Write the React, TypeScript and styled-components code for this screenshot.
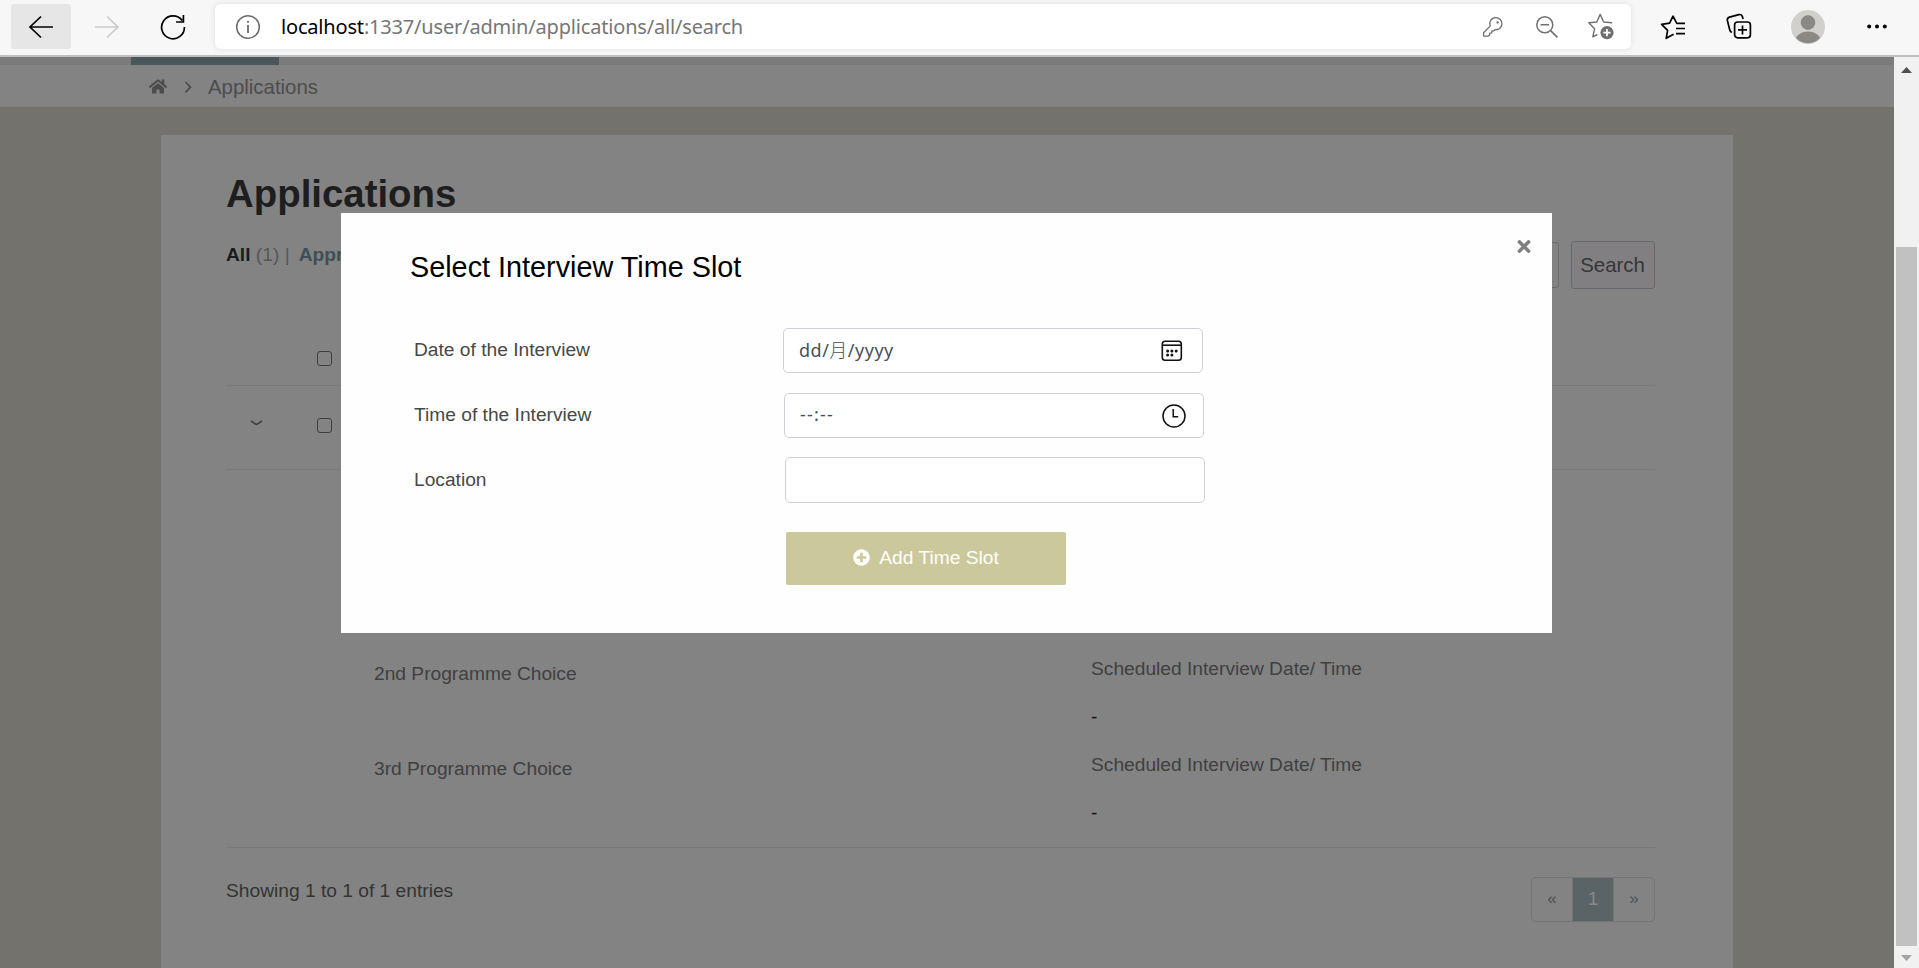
import React from "react";
import styled, { createGlobalStyle } from "styled-components";
import { FaHome, FaPlusCircle, FaTimes } from "react-icons/fa";

const GlobalStyle = createGlobalStyle`
  *, *::before, *::after { box-sizing: border-box; }
  html, body { margin: 0; padding: 0; overflow: hidden; }
  body { font-family: "Liberation Sans", Arial, sans-serif; font-size: 19.2px; line-height: 24px; }
  svg { display: block; flex: none; }
`;

const Browser = styled.div`
  display: flex;
  flex-direction: column;
  width: 1919px;
  height: 968px;
  overflow: hidden;
`;

/* ---------- toolbar ---------- */

const Toolbar = styled.header`
  display: flex;
  flex: none;
  height: 57px;
  padding: 4px 0 0 11px;
  background: #f7f7f7;
  border-bottom: 2px solid #bfbfbf;
`;

const ToolButton = styled.span<{ $width: number; $active?: boolean }>`
  display: flex;
  align-items: center;
  justify-content: center;
  width: ${(p) => p.$width}px;
  height: 45px;
  border-radius: 3px;
  background: ${(p) => (p.$active ? "#e6e6e6" : "transparent")};
`;

const AddressBar = styled.div`
  display: flex;
  align-items: center;
  width: 1416px;
  height: 45px;
  margin-left: 12px;
  padding: 0 16px 0 20px;
  border-radius: 6px;
  background: #fff;
  box-shadow: 0 0 6px rgba(0, 0, 0, 0.1);
`;

const Url = styled.span`
  flex: 1;
  margin-left: 20px;
  font-family: "Noto Sans", sans-serif;
  font-size: 20px;
  letter-spacing: -0.18px;
  line-height: 28px;
  white-space: nowrap;
  color: #767676;
`;

const UrlHost = styled.span`
  color: #000;
`;

const AddressActions = styled.span`
  display: flex;
  align-items: center;
  gap: 28px;
`;

/* ---------- page ---------- */

const Viewport = styled.div`
  position: relative;
  display: flex;
  flex: 1;
  min-height: 0;
`;

const Page = styled.main`
  display: flex;
  flex-direction: column;
  width: 1894px;
  background: #73726d;
`;

const NavStrip = styled.div`
  flex: none;
  height: 8px;
  padding-left: 131px;
  background: #7b7b7b;
`;

const NavTab = styled.div`
  width: 148px;
  height: 8px;
  background: #49565a;
`;

const Breadcrumb = styled.nav`
  display: flex;
  flex: none;
  align-items: center;
  height: 42px;
  padding: 1px 0 0 149px;
  background: #838383;
  color: #4c4c4c;
  font-size: 20.4px;
`;

const HomeIcon = styled(FaHome)`
  width: 18px;
  height: 17px;
`;

const Crumb = styled.span`
  margin: 1px 0 0 15px;
`;

const Card = styled.section`
  display: flex;
  flex-direction: column;
  flex: 1;
  width: 1572px;
  margin: 28px 0 0 161px;
  padding: 36px 78px 0 65px;
  background: #838383;
`;

const Title = styled.h1`
  margin: 0;
  font-size: 38.4px;
  line-height: 46px;
  font-weight: 700;
  color: #1e1e1e;
`;

const FilterRow = styled.div`
  display: flex;
  justify-content: space-between;
  height: 72px;
  margin-top: 24px;
`;

const Filters = styled.div`
  display: flex;
  gap: 9px;
  margin-top: 2px;
  color: #575757;
  white-space: pre;
`;

const FilterName = styled.b<{ $link?: boolean }>`
  color: ${(p) => (p.$link ? "#3d4f59" : "#1c1c1c")};
`;

const SearchForm = styled.div`
  display: flex;
  gap: 12px;
`;

const SearchInput = styled.div`
  width: 300px;
  height: 46px;
  margin-top: 1px;
  border: 1px solid #6b6d70;
  border-radius: 3px;
`;

const SearchButton = styled.button`
  width: 84px;
  height: 48px;
  padding: 0 1px 0 0;
  border: 1px solid #65686d;
  border-radius: 3px;
  background: #827f82;
  color: #363636;
  font-family: inherit;
  font-size: 20.4px;
`;

const TableRow = styled.div<{ $height: number; $top: number }>`
  display: flex;
  height: ${(p) => p.$height}px;
  padding-top: ${(p) => p.$top}px;
  border-bottom: 1px solid #7a7a7a;
`;

const ExpandCell = styled.div`
  width: 91px;
  padding: 1px 0 0 24px;
`;

const Checkbox = styled.span`
  width: 15px;
  height: 15px;
  border: 1px solid #3e3e3e;
  border-radius: 3px;
`;

const Details = styled.div`
  display: flex;
  height: 378px;
  padding: 187px 0 0 148px;
  border-bottom: 1px solid #7a7a7a;
`;

const ChoiceColumn = styled.div`
  display: flex;
  flex-direction: column;
  gap: 71px;
  width: 717px;
  padding-top: 5px;
`;

const ScheduleColumn = styled.div`
  display: flex;
  flex-direction: column;
  gap: 24px;
`;

const DetailText = styled.span<{ $dark?: boolean }>`
  height: 24px;
  color: ${(p) => (p.$dark ? "#121212" : "#404040")};
`;

const Footer = styled.div`
  display: flex;
  justify-content: space-between;
  padding-top: 29px;
`;

const Entries = styled.span`
  padding-top: 2px;
  color: #343434;
`;

const Pager = styled.div`
  display: flex;
  width: 124px;
  height: 45px;
  border: 1px solid #747474;
  border-radius: 5px;
  overflow: hidden;
`;

const PageLink = styled.span<{ $active?: boolean }>`
  flex: 1;
  padding-top: 9px;
  text-align: center;
  font-size: ${(p) => (p.$active ? "19.2px" : "17px")};
  color: ${(p) => (p.$active ? "#888" : "#485258")};
  background: ${(p) => (p.$active ? "#5a6366" : "transparent")};
  & + & { border-left: 1px solid #747474; }
`;

/* ---------- scrollbar ---------- */

const Scrollbar = styled.div`
  display: flex;
  flex-direction: column;
  align-items: center;
  justify-content: space-between;
  width: 25px;
  padding: 10px 0 7px;
  background: #f1f1f1;
`;

const Thumb = styled.div`
  width: 21px;
  height: 699px;
  margin: 165px 0 0;
  background: #c1c1c1;
`;

/* ---------- dialog ---------- */

const Dialog = styled.div`
  position: absolute;
  left: 341px;
  top: 156px;
  width: 1211px;
  height: 420px;
  padding: 26px 21px 0 69px;
  background: #fefefe;
`;

const DialogHeader = styled.div`
  display: flex;
  justify-content: space-between;
  height: 76px;
`;

const DialogTitle = styled.h2`
  margin: 10px 0 0;
  font-size: 28.8px;
  line-height: 36px;
  font-weight: 400;
  color: #000;
`;

const CloseIcon = styled(FaTimes)`
  width: 14px;
  height: 19px;
  margin-top: -2px;
  color: #808080;
`;

const Field = styled.label<{ $indent: number; $height: number }>`
  display: grid;
  grid-template-columns: ${(p) => p.$indent}px 420px;
  height: ${(p) => p.$height}px;
  padding-left: 4px;
  color: #484848;
`;

const FieldName = styled.span<{ $top: number }>`
  padding-top: ${(p) => p.$top}px;
`;

const Control = styled.span<{ $height: number; $top?: number; $right?: number }>`
  display: flex;
  align-items: center;
  justify-content: space-between;
  height: ${(p) => p.$height}px;
  margin-top: ${(p) => p.$top ?? 13}px;
  padding: 0 ${(p) => p.$right ?? 17}px 0 15px;
  border: 1px solid #ced0d9;
  border-radius: 5px;
  background: #fff;
  font-family: "Noto Sans", "Noto Sans CJK SC", sans-serif;
  font-size: 18px;
  color: #495057;
`;

const ControlText = styled.span<{ $spacing: number }>`
  padding-bottom: 3px;
  letter-spacing: ${(p) => p.$spacing}px;
`;

const MonthMark = styled.span`
  font-family: "Noto Sans CJK SC", sans-serif;
  font-weight: 300;
`;

const AddButton = styled.button`
  display: flex;
  align-items: center;
  justify-content: center;
  gap: 9px;
  width: 280px;
  height: 53px;
  margin: 22px 0 0 376px;
  padding: 0 0 2px 0;
  border: 0;
  border-radius: 2px;
  background: #cbc99c;
  color: #fff;
  font-family: inherit;
  font-size: 19.2px;
`;

const PlusIcon = styled(FaPlusCircle)`
  width: 17px;
  height: 17px;
`;

/* ---------- drawings ---------- */

const Arrow = ({ flip, color }: { flip?: boolean; color: string }) => (
  <svg width="26" height="24" viewBox="0 0 26 24" fill="none" stroke={color} strokeWidth="1.7" transform={flip ? "scale(-1 1)" : undefined}>
    <path d="M25 12H2M13 1.5 2 12l11 10.5" />
  </svg>
);

const Reload = () => (
  <svg width="26" height="26" viewBox="0 0 26 26" fill="none" stroke="#000" strokeWidth="1.7">
    <path d="M22.2 6.6A11.4 11.4 0 1 0 24.4 13M23.4 1v7h-7.3" />
  </svg>
);

const Info = () => (
  <svg width="26" height="26" viewBox="0 0 26 26" fill="none" stroke="#6a6a6a" strokeWidth="1.5">
    <circle cx="13" cy="13" r="11.3" />
    <path d="M13 11v8" strokeWidth="1.8" />
    <circle cx="13" cy="7.8" r="1.1" fill="#6a6a6a" stroke="none" />
  </svg>
);

const Key = () => (
  <svg width="25" height="22" viewBox="0 0 25 22" fill="none" stroke="#6f6f6f" strokeWidth="1.3" strokeLinejoin="round">
    <path d="M13.7 1.6a6.1 6.1 0 1 1-.9 12.1l-1.3 1.2-1.6.1-.2 1.9-1.9.2-.2 1.8-1.4 1.2H1.6v-3.4l6.6-6.6a6.1 6.1 0 0 1 5.5-8.5z" />
    <circle cx="15.6" cy="6.4" r="1.2" fill="#6f6f6f" stroke="none" />
  </svg>
);

const ZoomOut = () => (
  <svg width="24" height="24" viewBox="0 0 24 24" fill="none" stroke="#6f6f6f" strokeWidth="1.5">
    <circle cx="9.8" cy="9.8" r="8" />
    <path d="M5.5 9.8h8.6M15.6 15.6l6.8 6.8" />
  </svg>
);

const StarAdd = () => (
  <svg width="28" height="27" viewBox="0 0 28 27" fill="none" stroke="#6f6f6f" strokeWidth="1.4" strokeLinejoin="round">
    <path d="M25.2 9.8 16.6 9 13.2 1.4 9.8 9 1.8 9.8l5.8 6-1.8 8 4.6-2.3" />
    <circle cx="20" cy="19.6" r="6.6" fill="#6f6f6f" stroke="none" />
    <path d="M20 16v7.2M16.4 19.6h7.2" stroke="#fff" strokeWidth="1.7" />
  </svg>
);

const Favorites = () => (
  <svg width="26" height="26" viewBox="0 0 26 26" fill="none" stroke="#000" strokeWidth="1.7" strokeLinejoin="round">
    <path d="M25 9.4h-8.2L13 2.2 9.6 9.2 1.6 10.3l6 6-1.4 8 7.4-4M16 14.5h9M16 19.6h9" />
  </svg>
);

const Collections = () => (
  <svg width="26" height="27" viewBox="0 0 26 27" fill="none" stroke="#000" strokeWidth="1.7">
    <path d="M5.8 19.6C4.6 19 4 18 3.7 16.8L1.4 7.6C1 5.8 1.9 4.6 3.6 4.1L12.8 1.6c1.8-.4 2.9.3 3.5 1.8l.8 2.6" />
    <rect x="8.6" y="9" width="15.8" height="15.8" rx="3" />
    <path d="M16.5 12.4v9M12 16.9h9" />
  </svg>
);

const Avatar = () => (
  <svg width="34" height="34" viewBox="0 0 34 34">
    <defs>
      <clipPath id="avatar-clip"><circle cx="17" cy="17" r="16.3" /></clipPath>
    </defs>
    <circle cx="17" cy="17" r="17" fill="#d2d0cc" />
    <g clipPath="url(#avatar-clip)" fill="#8c8884">
      <circle cx="17" cy="12.6" r="7.3" />
      <ellipse cx="17" cy="32" rx="13" ry="10.5" />
    </g>
  </svg>
);

const Dots = () => (
  <svg width="20" height="5" viewBox="0 0 20 5">
    <circle cx="2.2" cy="2.5" r="2" />
    <circle cx="10" cy="2.5" r="2" />
    <circle cx="17.8" cy="2.5" r="2" />
  </svg>
);

const ChevronRight = styled.svg`
  margin-left: 17px;
`;

const Calendar = () => (
  <svg width="22" height="22" viewBox="0 0 22 22" fill="none" stroke="#111" strokeWidth="1.6">
    <rect x="1.3" y="1.3" width="19" height="19" rx="2.8" />
    <path d="M1.3 5.2h19" />
    <g fill="#111" stroke="none">
      <circle cx="6.6" cy="11" r="1.5" />
      <circle cx="10.9" cy="11" r="1.5" />
      <circle cx="15.2" cy="11" r="1.5" />
      <circle cx="6.6" cy="15.1" r="1.5" />
      <circle cx="10.9" cy="15.1" r="1.5" />
    </g>
  </svg>
);

const Clock = () => (
  <svg width="24" height="24" viewBox="0 0 24 24" fill="none" stroke="#111" strokeWidth="1.5">
    <circle cx="12" cy="12" r="11" />
    <path d="M11.2 5v7.8h5" />
  </svg>
);

const RightTools = styled.div`
  display: flex;
  align-items: center;
  height: 45px;
  padding-left: 29px;
`;

const ToolSlot = styled.span<{ $width: number }>`
  width: ${(p) => p.$width}px;
`;

export default function App() {
  return (
    <Browser>
      <GlobalStyle />
      <Toolbar>
        <ToolButton $width={60} $active><Arrow color="#000" /></ToolButton>
        <ToolButton $width={72}><Arrow color="#cbcbcb" flip /></ToolButton>
        <ToolButton $width={60}><Reload /></ToolButton>
        <AddressBar>
          <Info />
          <Url><UrlHost>localhost</UrlHost>:1337/user/admin/applications/all/search</Url>
          <AddressActions>
            <Key />
            <ZoomOut />
            <StarAdd />
          </AddressActions>
        </AddressBar>
        <RightTools>
          <ToolSlot $width={66}><Favorites /></ToolSlot>
          <ToolSlot $width={65}><Collections /></ToolSlot>
          <ToolSlot $width={76}><Avatar /></ToolSlot>
          <Dots />
        </RightTools>
      </Toolbar>

      <Viewport>
        <Page>
          <NavStrip><NavTab /></NavStrip>
          <Breadcrumb>
            <HomeIcon />
            <ChevronRight width="9" height="14" viewBox="0 0 9 14" fill="none" stroke="#4c4c4c" strokeWidth="1.7">
              <path d="M1.5 2l5 5.2-5 5.2" />
            </ChevronRight>
            <Crumb>Applications</Crumb>
          </Breadcrumb>
          <Card>
            <Title>Applications</Title>
            <FilterRow>
              <Filters>
                <span><FilterName>All</FilterName> (1) |</span>
                <FilterName $link>Approved</FilterName>
              </Filters>
              <SearchForm>
                <SearchInput />
                <SearchButton>Search</SearchButton>
              </SearchForm>
            </FilterRow>
            <TableRow $height={73} $top={38}>
              <ExpandCell />
              <Checkbox />
            </TableRow>
            <TableRow $height={84} $top={32}>
              <ExpandCell>
                <svg width="13" height="8" viewBox="0 0 13 8" fill="none" stroke="#3e3e3e" strokeWidth="1.7">
                  <path d="M1 2C4 3.5 5 5.300 6.500 5.300S9 3.500 12 2" />
                </svg>
              </ExpandCell>
              <Checkbox />
            </TableRow>
            <Details>
              <ChoiceColumn>
                <DetailText>2nd Programme Choice</DetailText>
                <DetailText>3rd Programme Choice</DetailText>
              </ChoiceColumn>
              <ScheduleColumn>
                <DetailText>Scheduled Interview Date/ Time</DetailText>
                <DetailText $dark>-</DetailText>
                <DetailText>Scheduled Interview Date/ Time</DetailText>
                <DetailText $dark>-</DetailText>
              </ScheduleColumn>
            </Details>
            <Footer>
              <Entries>Showing 1 to 1 of 1 entries</Entries>
              <Pager>
                <PageLink>«</PageLink>
                <PageLink $active>1</PageLink>
                <PageLink>»</PageLink>
              </Pager>
            </Footer>
          </Card>
        </Page>

        <Scrollbar>
          <svg width="11" height="6" viewBox="0 0 11 6"><path d="M5.5 0 11 6H0z" fill="#505050" /></svg>
          <Thumb />
          <svg width="11" height="6" viewBox="0 0 11 6"><path d="M5.5 6 11 0H0z" fill="#a3a3a3" /></svg>
        </Scrollbar>

        <Dialog role="dialog">
          <DialogHeader>
            <DialogTitle>Select Interview Time Slot</DialogTitle>
            <CloseIcon />
          </DialogHeader>
          <Field $indent={369} $height={65}>
            <FieldName $top={23}>Date of the Interview</FieldName>
            <Control $height={45} $right={19}>
              <ControlText $spacing={0.5}>dd/<MonthMark>月</MonthMark>/yyyy</ControlText>
              <Calendar />
            </Control>
          </Field>
          <Field $indent={370} $height={65}>
            <FieldName $top={23}>Time of the Interview</FieldName>
            <Control $height={45}>
              <ControlText $spacing={1.2}>--:--</ControlText>
              <Clock />
            </Control>
          </Field>
          <Field $indent={371} $height={65}>
            <FieldName $top={23}>Location</FieldName>
            <Control $height={46} $top={12} />
          </Field>
          <AddButton>
            <PlusIcon />
            Add Time Slot
          </AddButton>
        </Dialog>
      </Viewport>
    </Browser>
  );
}
